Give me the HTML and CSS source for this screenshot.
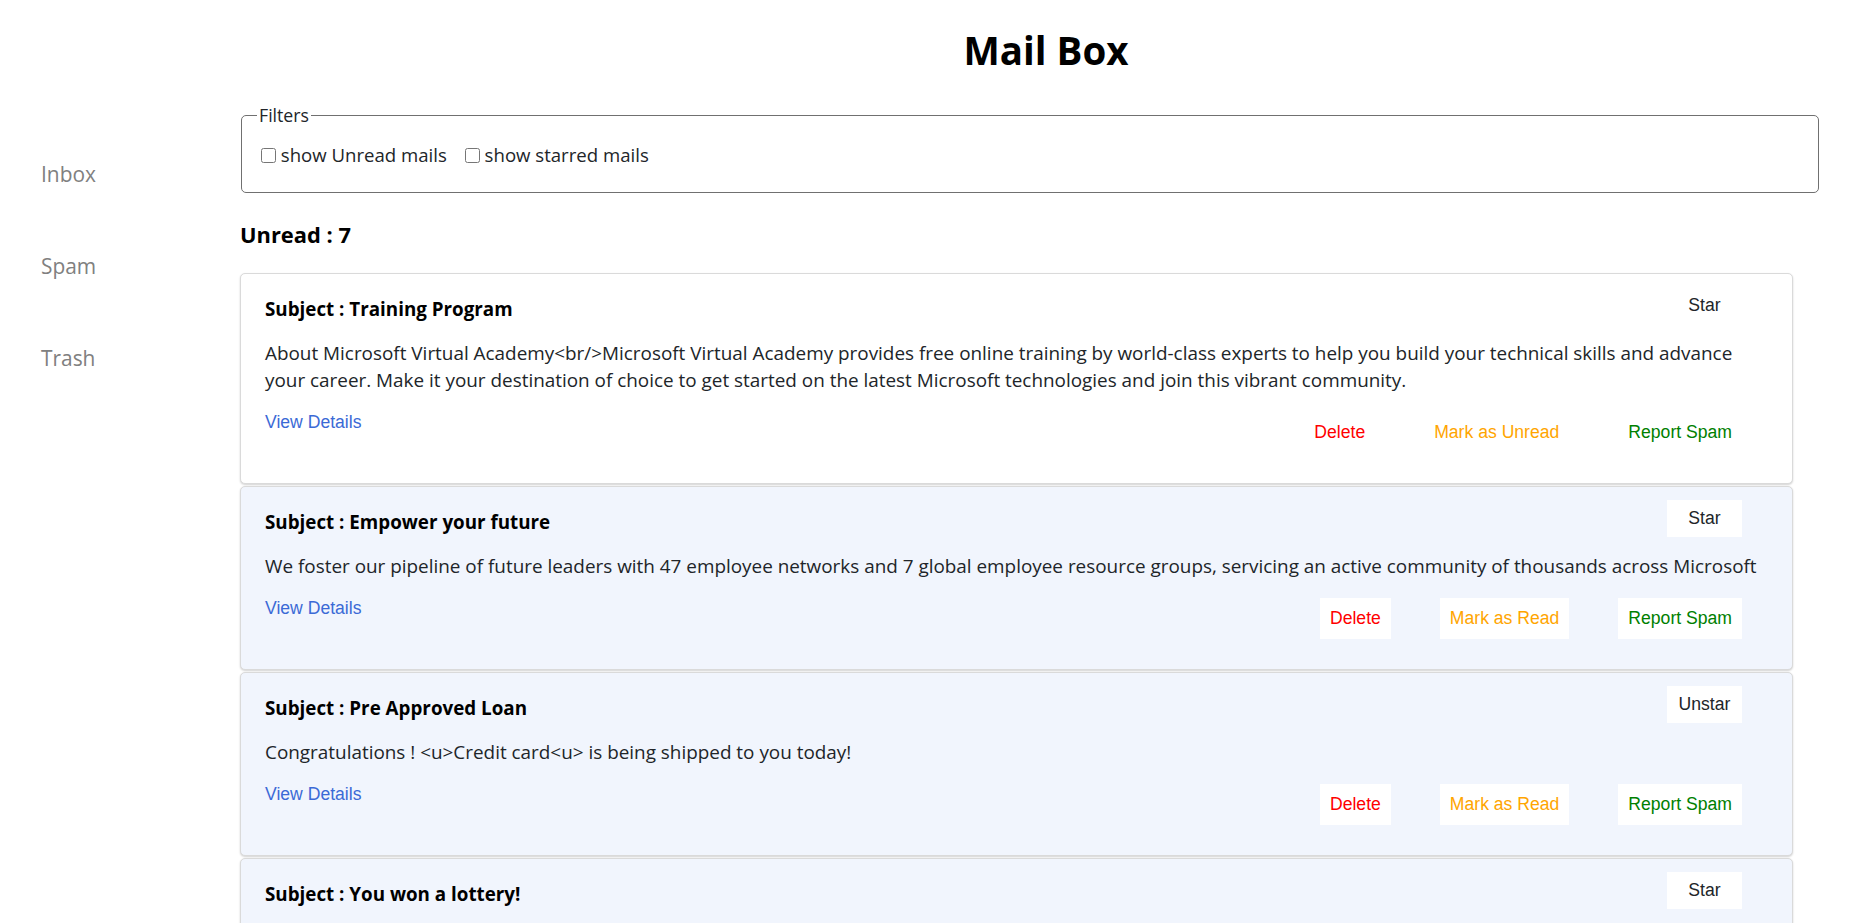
FILE: index.html
```html
<!DOCTYPE html>
<html lang="en">
<head>
<meta charset="utf-8">
<title>Mail Box</title>
<link rel="stylesheet" href="styles.css">
</head>
<body>
<div class="app">
  <nav class="sidebar">
    <a class="nav-item" href="#">Inbox</a>
    <a class="nav-item" href="#">Spam</a>
    <a class="nav-item" href="#">Trash</a>
  </nav>
  <main class="main">
    <h1 class="title">Mail Box</h1>
    <fieldset class="filters">
      <legend>Filters</legend>
      <label class="filter"><input type="checkbox"> show Unread mails</label>
      <label class="filter"><input type="checkbox"> show starred mails</label>
    </fieldset>
    <h2 class="unread-count">Unread : 7</h2>
    <div class="mail-list">
      <article class="mail read">
        <div class="mail-head">
          <p class="subject">Subject : Training Program</p>
          <button class="star-btn">Star</button>
        </div>
        <p class="body">About Microsoft Virtual Academy&lt;br/&gt;Microsoft Virtual Academy provides free online training by world-class experts to help you build your technical skills and advance your career. Make it your destination of choice to get started on the latest Microsoft technologies and join this vibrant community.</p>
        <div class="mail-foot">
          <button class="link-btn">View Details</button>
          <div class="actions">
            <button class="act delete">Delete</button>
            <button class="act mark">Mark as Unread</button>
            <button class="act spam">Report Spam</button>
          </div>
        </div>
      </article>
      <article class="mail unread">
        <div class="mail-head">
          <p class="subject">Subject : Empower your future</p>
          <button class="star-btn">Star</button>
        </div>
        <p class="body">We foster our pipeline of future leaders with 47 employee networks and 7 global employee resource groups, servicing an active community of thousands across Microsoft</p>
        <div class="mail-foot">
          <button class="link-btn">View Details</button>
          <div class="actions">
            <button class="act delete">Delete</button>
            <button class="act mark">Mark as Read</button>
            <button class="act spam">Report Spam</button>
          </div>
        </div>
      </article>
      <article class="mail unread">
        <div class="mail-head">
          <p class="subject">Subject : Pre Approved Loan</p>
          <button class="star-btn">Unstar</button>
        </div>
        <p class="body">Congratulations ! &lt;u&gt;Credit card&lt;u&gt; is being shipped to you today!</p>
        <div class="mail-foot">
          <button class="link-btn">View Details</button>
          <div class="actions">
            <button class="act delete">Delete</button>
            <button class="act mark">Mark as Read</button>
            <button class="act spam">Report Spam</button>
          </div>
        </div>
      </article>
      <article class="mail unread">
        <div class="mail-head">
          <p class="subject">Subject : You won a lottery!</p>
          <button class="star-btn">Star</button>
        </div>
        <p class="body">Congratulations! You have won a lottery. Reply with your bank details to claim the prize.</p>
        <div class="mail-foot">
          <button class="link-btn">View Details</button>
          <div class="actions">
            <button class="act delete">Delete</button>
            <button class="act mark">Mark as Read</button>
            <button class="act spam">Report Spam</button>
          </div>
        </div>
      </article>
    </div>
  </main>
</div>
</body>
</html>
```
FILE: styles.css
```css
* { box-sizing: border-box; }

html, body {
  margin: 0;
  padding: 0;
  background: #fff;
}

body {
  font-family: "Open Sans", "Noto Sans", sans-serif;
  font-size: 18.9px;
  line-height: 26.4px;
  color: #212529;
}

.app {
  display: flex;
  align-items: flex-start;
}

/* Sidebar */
.sidebar {
  width: 240px;
  flex: 0 0 240px;
  display: flex;
  flex-direction: column;
  gap: 64px;
  padding: 160px 0 0 41px;
}

.nav-item {
  font-size: 20.9px;
  line-height: 28px;
  color: #808080;
  text-decoration: none;
}

/* Main column */
.main {
  flex: 1;
  min-width: 0;
}

.title {
  margin: 0;
  padding-top: 26px;
  font-size: 38.5px;
  line-height: 48px;
  font-weight: 700;
  text-align: center;
  color: #000;
}

.filters {
  margin: 29px 33px 0 1px;
  padding: 15px 15px 24px;
  border: 1px solid #707070;
  border-radius: 5px;
}

.filters legend {
  padding: 0 2px;
  font-size: 17.7px;
  line-height: 24px;
  color: #212529;
}

.filter {
  font-size: 18.6px;
  line-height: 26px;
  margin-right: 9px;
  color: #212529;
}

.filter input {
  width: 15px;
  height: 15px;
  margin: 0 0 0 4px;
  vertical-align: -1px;
}

.unread-count {
  margin: 29px 0 25px;
  font-size: 21.9px;
  line-height: 26px;
  font-weight: 700;
  color: #000;
}

/* Mail cards */
.mail-list {
  margin-right: 59px;
}

.mail {
  border: 1px solid #dadada;
  border-radius: 5px;
  box-shadow: 0 1px 2px rgba(0, 0, 0, 0.18);
  padding: 22px 24px 30px 24px;
  margin-bottom: 2px;
}

.mail.read { background: #fff; }
.mail.unread { background: #f1f5fd; }

.mail-head {
  display: flex;
  justify-content: space-between;
  align-items: flex-start;
}

.subject {
  margin: 0;
  font-weight: 700;
  font-size: 18.8px;
  color: #000;
}

.star-btn {
  width: 75px;
  height: 37px;
  margin: -9px 26px -11px 0;
  padding: 0;
  border: none;
  background: #fff;
  font-family: "Liberation Sans", Arial, sans-serif;
  font-size: 17.6px;
  color: #212529;
}

.mail.read .star-btn { background: transparent; }

.body {
  margin: 17.6px 0 18.6px;
  font-size: 18.9px;
  color: #212529;
}

.mail-foot {
  display: flex;
  justify-content: space-between;
  align-items: flex-start;
}

.link-btn {
  padding: 0;
  border: none;
  background: none;
  font-family: "Liberation Sans", Arial, sans-serif;
  font-size: 17.6px;
  line-height: 20px;
  color: #3b6ad6;
}

.actions {
  display: flex;
  gap: 49px;
  margin-right: 26px;
}

.act {
  padding: 10px;
  border: none;
  background: #fff;
  font-family: "Liberation Sans", Arial, sans-serif;
  font-size: 17.6px;
  line-height: 21px;
}

.mail.read .act { background: transparent; }

.act.delete { color: #ff0000; }
.act.mark { color: #ffa500; }
.act.spam { color: #008000; }
```
